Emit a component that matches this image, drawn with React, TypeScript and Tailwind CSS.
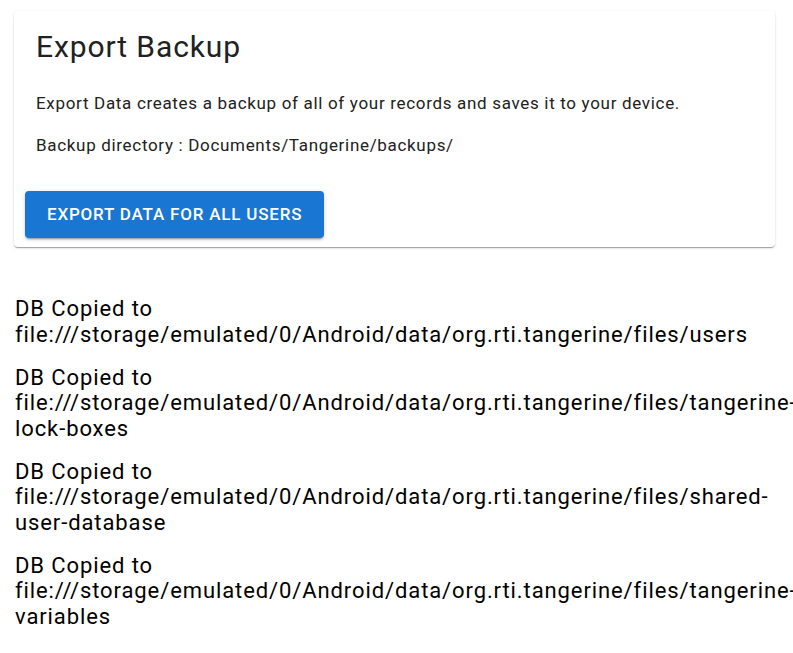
import React from 'react';

const paths = [
  'file:///storage/emulated/0/Android/data/org.rti.tangerine/files/users',
  'file:///storage/emulated/0/Android/data/org.rti.tangerine/files/tangerine-lock-boxes',
  'file:///storage/emulated/0/Android/data/org.rti.tangerine/files/shared-user-database',
  'file:///storage/emulated/0/Android/data/org.rti.tangerine/files/tangerine-variables',
];

const App: React.FC = () => {
  return (
    <div className="min-h-[653px] overflow-x-hidden bg-white font-['Roboto',sans-serif] pt-[11px]">
      <div className="ml-[14px] w-[761px] bg-white rounded-[4px] shadow-[0_2px_1px_-1px_rgba(0,0,0,0.2),0_1px_1px_0_rgba(0,0,0,0.14),0_1px_3px_0_rgba(0,0,0,0.12)] pt-[18px] pb-[9px] px-[11px]">
        <h2 className="px-[11px] text-[30px] leading-[36px] tracking-[0.9px] text-[#212121]">Export Backup</h2>
        <p className="px-[11px] mt-[28px] text-[17px] leading-[20px] tracking-[0.68px] text-[#212121]">
          Export Data creates a backup of all of your records and saves it to your device.
        </p>
        <p className="px-[11px] mt-[22px] text-[17px] leading-[20px] tracking-[0.68px] text-[#212121]">
          Backup directory : Documents/Tangerine/backups/
        </p>
        <button className="mt-[36px] h-[47px] px-[22px] rounded-[4px] bg-[#1976d2] text-white text-[17px] tracking-[0.8px] font-medium uppercase shadow-[0_3px_1px_-2px_rgba(0,0,0,0.2),0_2px_2px_0_rgba(0,0,0,0.14),0_1px_5px_0_rgba(0,0,0,0.12)]">
          Export Data for all users
        </button>
      </div>
      <div className="ml-[15px] w-[770px] mt-[49px] text-[22px] leading-[25.5px] tracking-[0.9px] text-black">
        {paths.map((p) => (
          <div key={p} className="mb-[17.5px]">
            DB Copied to {p}
          </div>
        ))}
      </div>
    </div>
  );
};

export default App;
